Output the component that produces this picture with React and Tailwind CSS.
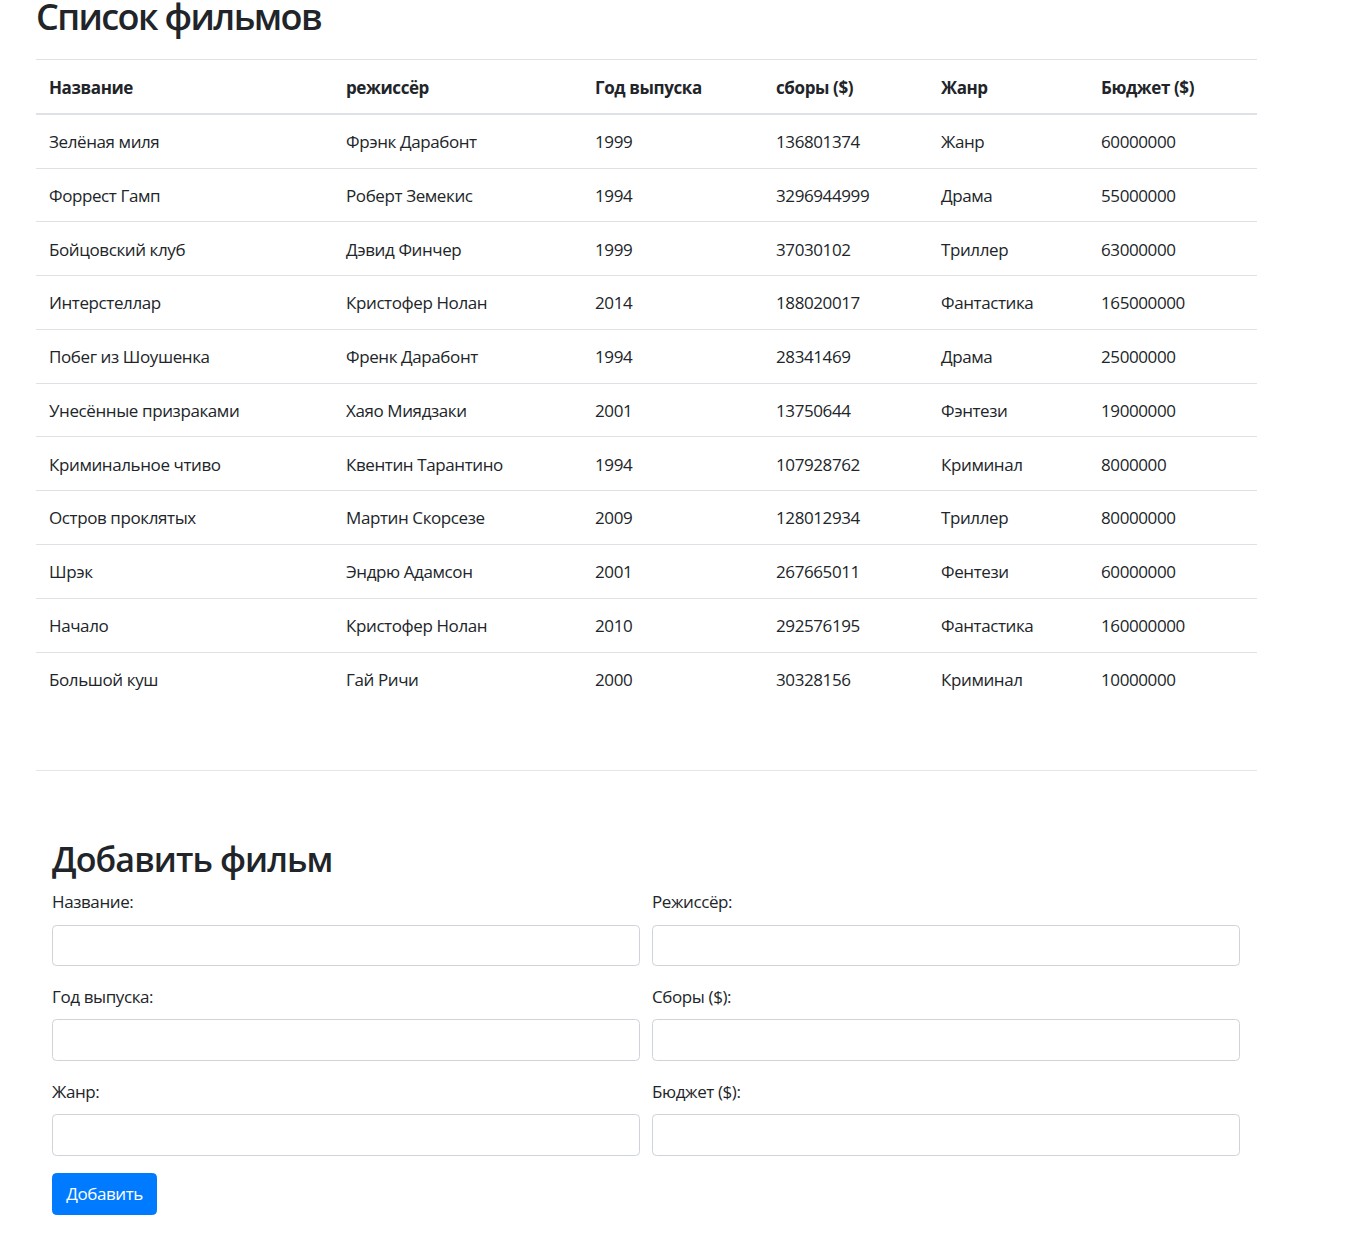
import { useState } from "react"

const films = [
  ["Зелёная миля", "Фрэнк Дарабонт", "1999", "136801374", "Жанр", "60000000"],
  ["Форрест Гамп", "Роберт Земекис", "1994", "3296944999", "Драма", "55000000"],
  ["Бойцовский клуб", "Дэвид Финчер", "1999", "37030102", "Триллер", "63000000"],
  ["Интерстеллар", "Кристофер Нолан", "2014", "188020017", "Фантастика", "165000000"],
  ["Побег из Шоушенка", "Френк Дарабонт", "1994", "28341469", "Драма", "25000000"],
  ["Унесённые призраками", "Хаяо Миядзаки", "2001", "13750644", "Фэнтези", "19000000"],
  ["Криминальное чтиво", "Квентин Тарантино", "1994", "107928762", "Криминал", "8000000"],
  ["Остров проклятых", "Мартин Скорсезе", "2009", "128012934", "Триллер", "80000000"],
  ["Шрэк", "Эндрю Адамсон", "2001", "267665011", "Фентези", "60000000"],
  ["Начало", "Кристофер Нолан", "2010", "292576195", "Фантастика", "160000000"],
  ["Большой куш", "Гай Ричи", "2000", "30328156", "Криминал", "10000000"],
]

const headers = ["Название", "режиссёр", "Год выпуска", "сборы ($)", "Жанр", "Бюджет ($)"]
const widths = ["w-[297px]", "w-[249px]", "w-[181px]", "w-[165px]", "w-[160px]", "w-[169px]"]

const fields = [
  ["Название:", "title"],
  ["Режиссёр:", "director"],
  ["Год выпуска:", "year"],
  ["Сборы ($):", "boxOffice"],
  ["Жанр:", "genre"],
  ["Бюджет ($):", "budget"],
]

export default function App() {
  const [form, setForm] = useState({})

  return (
    <div
      className="min-h-screen bg-white text-[#212529] text-[17px] leading-[26.4px] tracking-[-0.4px]"
      style={{ fontFamily: '"Open Sans", "Noto Sans", sans-serif' }}
    >
      <div className="w-[1221px] ml-[36px]">
        {/* LIST */}
        <h1 className="text-[36px] leading-[34px] font-semibold tracking-[-1.6px] mb-[25px]">
          Список фильмов
        </h1>

        <table className="w-full border-collapse text-left">
          <thead>
            <tr className="border-t border-[#dee2e6] border-b-2">
              {headers.map((h, i) => (
                <th key={h} className={`${widths[i]} px-[13px] pt-[15px] pb-[11.4px] font-bold align-bottom`}>
                  {h}
                </th>
              ))}
            </tr>
          </thead>
          <tbody>
            {films.map(row => (
              <tr key={row[0]} className="border-t border-[#dee2e6] first:border-t-0">
                {row.map((cell, i) => (
                  <td key={i} className="px-[13px] pt-[14.2px] pb-[12.2px]">
                    {cell}
                  </td>
                ))}
              </tr>
            ))}
          </tbody>
        </table>

        <hr className="mt-[65px] border-t border-[#e5e5e5]" />

        {/* FORM */}
        <div className="mx-[16px] mt-[67px]">
          <h2 className="text-[34px] leading-[42px] font-semibold tracking-[-0.9px] mb-[9px]">
            Добавить фильм
          </h2>
          <div className="grid grid-cols-2 gap-x-[12px] gap-y-[17.6px] w-[1188px]">
            {fields.map(([label, key]) => (
              <div key={key}>
                <label className="block mb-[8.8px]">{label}</label>
                <input
                  className="block w-full h-[41.8px] px-[13px] border border-[#ced4da] rounded-[4.4px] outline-none"
                  value={form[key] || ""}
                  onChange={e => setForm({ ...form, [key]: e.target.value })}
                />
              </div>
            ))}
          </div>
          <button className="mt-[17.6px] h-[41.8px] px-[13.2px] bg-[#007bff] text-white rounded-[4.4px] border border-[#007bff]">
            Добавить
          </button>
        </div>
      </div>
    </div>
  )
}
